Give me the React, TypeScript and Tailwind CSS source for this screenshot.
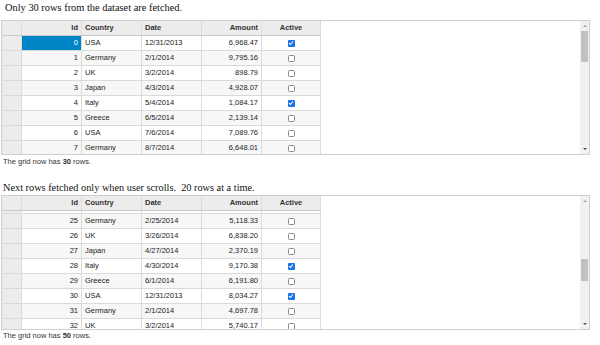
import React from "react";

type Row = {
  id: number;
  country: string;
  date: string;
  amount: string;
  active: boolean;
  hidden?: boolean;
};

// 첫번째 그리드: 처음 30개만 가져온 상태
const firstRows: Row[] = [
  { id: 0, country: "USA", date: "12/31/2013", amount: "6,968.47", active: true },
  { id: 1, country: "Germany", date: "2/1/2014", amount: "9,795.16", active: false },
  { id: 2, country: "UK", date: "3/2/2014", amount: "898.79", active: false },
  { id: 3, country: "Japan", date: "4/3/2014", amount: "4,928.07", active: false },
  { id: 4, country: "Italy", date: "5/4/2014", amount: "1,084.17", active: true },
  { id: 5, country: "Greece", date: "6/5/2014", amount: "2,139.14", active: false },
  { id: 6, country: "USA", date: "7/6/2014", amount: "7,089.76", active: false },
  { id: 7, country: "Germany", date: "8/7/2014", amount: "6,648.01", active: false },
];

// 두번째 그리드: 스크롤된 상태 (24번은 헤더 밑에 걸려서 테두리만 보임)
const secondRows: Row[] = [
  { id: 24, country: "", date: "", amount: "", active: false, hidden: true },
  { id: 25, country: "Germany", date: "2/25/2014", amount: "5,118.33", active: false },
  { id: 26, country: "UK", date: "3/26/2014", amount: "6,838.20", active: false },
  { id: 27, country: "Japan", date: "4/27/2014", amount: "2,370.19", active: false },
  { id: 28, country: "Italy", date: "4/30/2014", amount: "9,170.38", active: true },
  { id: 29, country: "Greece", date: "6/1/2014", amount: "6,191.80", active: false },
  { id: 30, country: "USA", date: "12/31/2013", amount: "8,034.27", active: true },
  { id: 31, country: "Germany", date: "2/1/2014", amount: "4,697.78", active: false },
  { id: 32, country: "UK", date: "3/2/2014", amount: "5,740.17", active: false },
];

function Check({ checked }: { checked: boolean }) {
  if (checked) {
    return (
      <span className="flex h-[7px] w-[7px] items-center justify-center rounded-[1px] bg-[#1a73e8]">
        <svg width="6" height="6" viewBox="0 0 6 6">
          <path d="M1 3.2 L2.4 4.5 L5 1.5" stroke="white" strokeWidth="1.1" fill="none" />
        </svg>
      </span>
    );
  }
  return <span className="block h-[7px] w-[7px] rounded-[1.5px] border border-[#8a8a8a] bg-white" />;
}

function Scrollbar({ thumbTop, thumbHeight }: { thumbTop: number; thumbHeight: number }) {
  return (
    <div className="flex w-[9px] flex-col bg-[#f1f1f1]">
      <div className="flex h-[10px] items-center justify-center">
        <span className="h-0 w-0 border-x-[2px] border-b-[2px] border-x-transparent border-b-[#a0a0a0]" />
      </div>
      <div className="flex-1">
        <div className="mx-[1px] bg-[#c1c1c1]" style={{ marginTop: thumbTop, height: thumbHeight }} />
      </div>
      <div className="flex h-[10px] items-center justify-center">
        <span className="h-0 w-0 border-x-[2px] border-t-[2px] border-x-transparent border-t-[#505050]" />
      </div>
    </div>
  );
}

function Grid({
  rows,
  offset,
  selectedId,
  thumbTop,
  thumbHeight,
}: {
  rows: Row[];
  offset: number;
  selectedId?: number;
  thumbTop: number;
  thumbHeight: number;
}) {
  const cell = "h-full shrink-0 border-r border-[#dcdcdc] px-[3px] flex items-center";
  return (
    <div className="flex h-[135px] w-[589px] border border-[#cfcfcf] bg-white">
      <div className="flex flex-1 flex-col overflow-hidden">
        {/* 헤더 */}
        <div className="flex h-[15px] shrink-0 font-bold text-[#333]">
          <div className="flex h-full border-b border-[#c8c8c8] bg-[#ececec]">
            <div className={`${cell} w-[20px]`} />
            <div className={`${cell} w-[60px] justify-end`}>Id</div>
            <div className={`${cell} w-[60px]`}>Country</div>
            <div className={`${cell} w-[60px]`}>Date</div>
            <div className={`${cell} w-[60px] justify-end`}>Amount</div>
            <div className={`${cell} w-[59px] justify-center`}>Active</div>
          </div>
        </div>
        {/* 본문 */}
        <div className="flex-1 overflow-hidden">
          <div style={{ marginTop: offset }}>
            {rows.map((r) => (
              <div
                key={r.id}
                className={`flex h-[15px] w-max border-b border-[#dadada] text-[#222] ${
                  r.id % 2 === 1 ? "bg-[#f7f7f7]" : "bg-white"
                }`}
              >
                <div className={`${cell} w-[20px] bg-[#ececec]`} />
                <div
                  className={`${cell} w-[60px] justify-end ${
                    r.id === selectedId ? "bg-[#0085c7] text-white" : ""
                  }`}
                >
                  {r.hidden ? "" : r.id}
                </div>
                <div className={`${cell} w-[60px]`}>{r.country}</div>
                <div className={`${cell} w-[60px]`}>{r.date}</div>
                <div className={`${cell} w-[60px] justify-end`}>{r.amount}</div>
                <div className={`${cell} w-[59px] justify-center`}>
                  {r.hidden ? null : <Check checked={r.active} />}
                </div>
              </div>
            ))}
          </div>
        </div>
      </div>
      <Scrollbar thumbTop={thumbTop} thumbHeight={thumbHeight} />
    </div>
  );
}

export default function App() {
  return (
    <div className="h-[345px] w-[600px] overflow-hidden bg-white px-[1px] font-['Liberation_Sans',Arial,sans-serif] text-[7.5px]">
      <div className="h-5 pl-[4px] font-['Liberation_Serif','Times_New_Roman',serif] text-[10.4px] leading-4 text-[#111]">
        Only 30 rows from the dataset are fetched.
      </div>
      <Grid rows={firstRows} offset={0} selectedId={0} thumbTop={0} thumbHeight={31} />
      <div className="pl-[2px] text-[7.5px] leading-[14px] text-[#333]">
        The grid now has <b>30</b> rows.
      </div>

      <div className="h-[26px] pl-[2px] pt-[12px] font-['Liberation_Serif','Times_New_Roman',serif] text-[10.3px] leading-[14px] text-[#111]">
        Next rows fetched only when user scrolls.&nbsp; 20 rows at a time.
      </div>
      <Grid rows={secondRows} offset={-12} thumbTop={53} thumbHeight={22} />
      <div className="pl-[2px] text-[7.5px] leading-[12px] text-[#333]">
        The grid now has <b>50</b> rows.
      </div>
    </div>
  );
}
